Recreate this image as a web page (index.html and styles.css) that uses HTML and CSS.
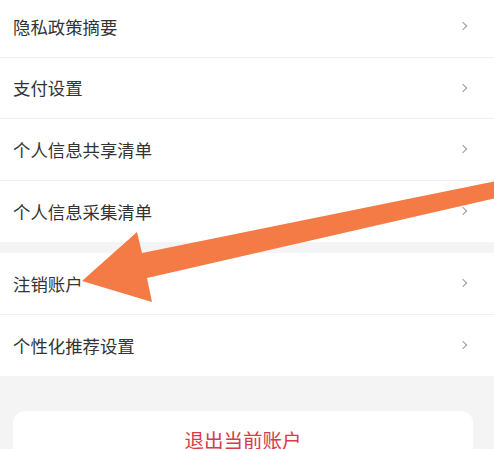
FILE: index.html
```html
<!DOCTYPE html>
<html lang="zh-CN">
<head>
    <meta charset="UTF-8">
    <meta name="viewport" content="width=device-width, initial-scale=1.0">
    <title>设置</title>
    <link rel="stylesheet" href="styles.css">
</head>
<body>
    <div class="settings">
        <ul class="group group-first">
            <li class="row"><span>隐私政策摘要</span><i class="chev"></i></li>
            <li class="row"><span>支付设置</span><i class="chev"></i></li>
            <li class="row"><span>个人信息共享清单</span><i class="chev"></i></li>
            <li class="row"><span>个人信息采集清单</span><i class="chev"></i></li>
        </ul>
        <ul class="group">
            <li class="row"><span>注销账户</span><i class="chev"></i></li>
            <li class="row"><span>个性化推荐设置</span><i class="chev"></i></li>
        </ul>
        <div class="logout-wrap">
            <button class="logout">退出当前账户</button>
        </div>
    </div>
    <svg class="pointer" width="494" height="449" viewBox="0 0 494 449">
        <polygon points="496,181 142,253 137,232 82,281 152,302 147,278 496,198" fill="#f47a46"/>
    </svg>
</body>
</html>
```

FILE: styles.css
```css
:root {
  --text: #333333;
  --line: #f1f1f1;
  --page-bg: #f4f4f4;
  --danger: #d63b4b;
}

body {
  margin: 0;
  background: var(--page-bg);
  font-family: "Noto Sans CJK SC", "Noto Sans", sans-serif;
  color: var(--text);
  overflow: hidden;
}

.settings {
  margin-top: -4px;
}

.group {
  list-style: none;
  margin: 0 0 11px;
  padding: 0;
  background: #ffffff;
}

.row {
  height: 60.5px;
  padding: 0 28px 0 13px;
  display: flex;
  align-items: center;
  justify-content: space-between;
  font-size: 17.4px;
  border-bottom: 1px solid var(--line);
}

.row:last-child {
  height: 61.5px;
  border-bottom: none;
}

.chev {
  width: 5px;
  height: 5px;
  border-top: 1.5px solid #9a9a9a;
  border-right: 1.5px solid #9a9a9a;
  transform: rotate(45deg);
}

.logout-wrap {
  padding: 24px 21px 0 13px;
}

.logout {
  display: block;
  width: 100%;
  height: 56px;
  border: none;
  border-radius: 12px;
  background: #ffffff;
  color: var(--danger);
  font-family: inherit;
  font-size: 19.5px;
  padding: 0;
}

.pointer {
  position: absolute;
  top: 0;
  left: 0;
  pointer-events: none;
}
```
